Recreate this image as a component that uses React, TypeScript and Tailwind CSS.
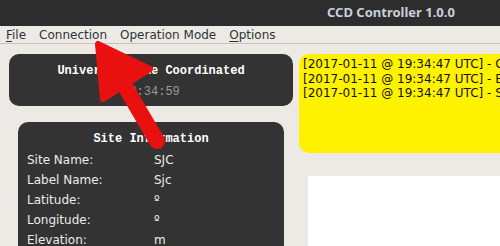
import React from "react";

const logLines = [
  "[2017-01-11 @ 19:34:47 UTC] - Connected",
  "[2017-01-11 @ 19:34:47 UTC] - Established",
  "[2017-01-11 @ 19:34:47 UTC] - Site",
];

const siteRows = [
  { label: "Site Name:", value: "SJC" },
  { label: "Label Name:", value: "Sjc" },
  { label: "Latitude:", value: "º" },
  { label: "Longitude:", value: "º" },
  { label: "Elevation:", value: "m" },
];

const Arrow = () => (
  <svg
    className="absolute left-0 top-0 pointer-events-none"
    width="500"
    height="246"
    viewBox="0 0 500 246"
  >
    <line
      x1="120"
      y1="78"
      x2="157"
      y2="141"
      stroke="#e8110f"
      strokeWidth="16"
      strokeLinecap="round"
    />
    <polygon
      points="98,44 103,99 150,69"
      fill="#e8110f"
      stroke="#e8110f"
      strokeWidth="6"
      strokeLinejoin="round"
    />
  </svg>
);

export default function App() {
  return (
    <div className="relative w-[500px] h-[246px] overflow-hidden bg-[#edeae6] font-['DejaVu_Sans',sans-serif]">
      <div className="h-[26px] bg-[#2d2d2d] flex items-center">
        <span className="ml-[327px] text-[13px] font-bold text-[#c9d0d8] whitespace-nowrap font-['Noto_Sans',sans-serif]">
          CCD Controller 1.0.0
        </span>
      </div>

      <div className="h-[18px] flex items-center border-b border-[#c4c1bc] text-[12px] text-[#2e3436] whitespace-nowrap">
        <span className="ml-[6px]">
          <span className="underline underline-offset-2">F</span>ile
        </span>
        <span className="ml-[13px]">Connection</span>
        <span className="ml-[13px]">Operation Mode</span>
        <span className="ml-[13px]">
          <span className="underline underline-offset-2">O</span>ptions
        </span>
      </div>

      <div className="flex">
        <div className="w-[299px] shrink-0">
          <div className="ml-[9px] mt-[10px] w-[284px] h-[52px] rounded-[10px] bg-[#333333] flex flex-col items-center pt-[9px] font-['Liberation_Mono',monospace]">
            <div className="text-[12px] font-bold text-white leading-[16px]">
              Universal Time Coordinated
            </div>
            <div className="mt-[5px] text-[12px] text-[#9a9a9a] leading-[16px]">
              19:34:59
            </div>
          </div>

          <div className="ml-[18px] mt-[16px] w-[266px] h-[140px] rounded-[10px] bg-[#333333] pt-[9px]">
            <div className="text-center text-[12px] font-bold text-white leading-[16px] font-['Liberation_Mono',monospace]">
              Site Information
            </div>
            <div className="mt-[3px] flex flex-col">
              {siteRows.map((row) => (
                <div
                  key={row.label}
                  className="flex h-[20px] items-center text-[12px] text-[#ececec]"
                >
                  <span className="ml-[9px] w-[127px]">{row.label}</span>
                  <span>{row.value}</span>
                </div>
              ))}
            </div>
          </div>
        </div>

        <div className="flex-1 min-w-0">
          <div className="mt-[10px] h-[99px] rounded-l-[10px] bg-[#fff200] pl-[4px] pt-[3px] text-[12px] leading-[14.5px] text-[#111] whitespace-nowrap overflow-hidden">
            {logLines.map((line, i) => (
              <div key={i}>{line}</div>
            ))}
          </div>
          <div className="ml-[9px] mt-[23px] h-[80px] bg-white" />
        </div>
      </div>

      <Arrow />
    </div>
  );
}
